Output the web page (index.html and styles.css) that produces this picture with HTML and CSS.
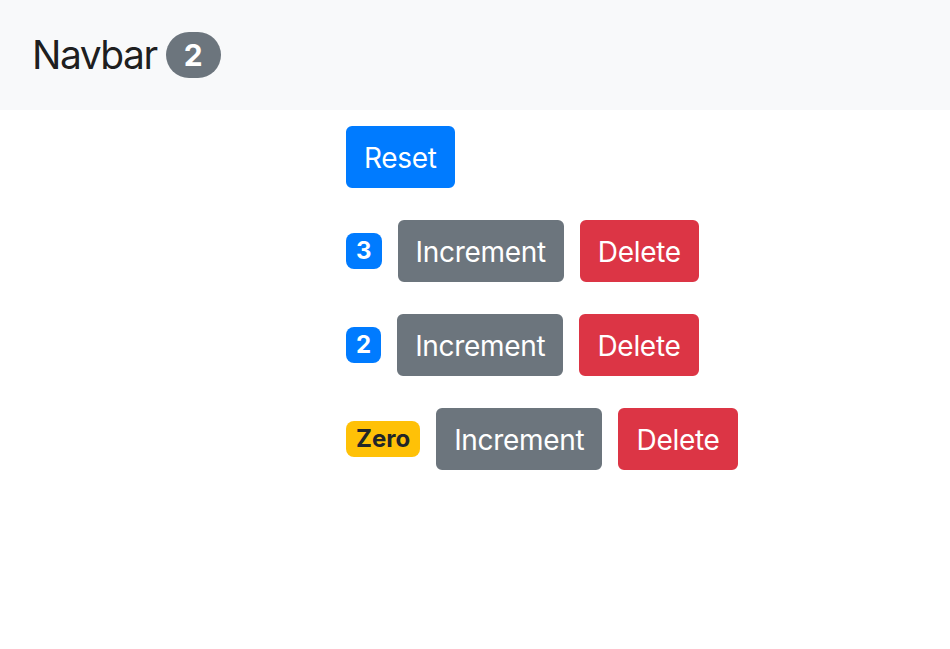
FILE: index.html
```html
<!DOCTYPE html>
<html>
<head>
<meta charset="utf-8">
<link rel="stylesheet" href="styles.css">
</head>
<body>
<nav class="navbar">
  <a class="brand" href="#">Navbar <span class="pill">2</span></a>
</nav>
<main class="main">
  <button class="btn btn-primary reset">Reset</button>
  <div class="row">
    <span class="badge badge-primary">3</span>
    <button class="btn btn-secondary">Increment</button>
    <button class="btn btn-danger">Delete</button>
  </div>
  <div class="row">
    <span class="badge badge-primary">2</span>
    <button class="btn btn-secondary">Increment</button>
    <button class="btn btn-danger">Delete</button>
  </div>
  <div class="row">
    <span class="badge badge-warning">Zero</span>
    <button class="btn btn-secondary">Increment</button>
    <button class="btn btn-danger">Delete</button>
  </div>
</main>
</body>
</html>
```
FILE: styles.css
```css
* { box-sizing: border-box; }
html, body { margin: 0; padding: 0; }
body {
  font-family: Inter, "Helvetica Neue", Arial, sans-serif;
  color: #212529;
  background: #fff;
}
.navbar {
  height: 110px;
  background: #f8f9fa;
  padding: 0 32px;
  display: flex;
  align-items: center;
}
.brand {
  font-size: 39px;
  line-height: 60px;
  letter-spacing: -1.5px;
  color: rgba(0,0,0,.9);
  text-decoration: none;
  display: flex;
  align-items: center;
  gap: 9px;
}
.pill {
  display: inline-block;
  font-size: 30px;
  font-weight: 700;
  line-height: 1;
  letter-spacing: 0;
  padding: 8px 18px;
  border-radius: 160px;
  background: #6c757d;
  color: #fff;
}
.main {
  padding: 16px 0 0 346px;
}
.reset { display: block; margin-bottom: 32px; }
.row {
  display: flex;
  align-items: center;
  gap: 16px;
  margin-bottom: 32px;
}
.btn {
  font-family: inherit;
  font-size: 28px;
  line-height: 42px;
  letter-spacing: -0.3px;
  padding: 9px 16px 7px;
  border: 2px solid transparent;
  border-radius: 6px;
  color: #fff;
  cursor: pointer;
}
.btn-primary { background: #007bff; border-color: #007bff; }
.btn-secondary { background: #6c757d; border-color: #6c757d; }
.btn-danger { background: #dc3545; border-color: #dc3545; }
.badge {
  display: inline-block;
  font-size: 24px;
  font-weight: 700;
  line-height: 1;
  padding: 6px 10px;
  border-radius: 8px;
}
.badge-primary { background: #007bff; color: #fff; }
.badge-warning { background: #ffc107; color: #212529; }
```
